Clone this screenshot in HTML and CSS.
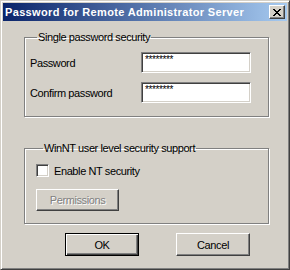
FILE: index.html
```
<!DOCTYPE html>
<html>
<head>
<meta charset="utf-8">
<link rel="stylesheet" href="styles.css">
</head>
<body>
<div class="window">
  <div class="titlebar">
    <span class="title">Password for Remote Administrator Server</span>
    <button class="close" aria-label="Close">
      <svg width="8" height="7" viewBox="0 0 8 7"><path d="M0 0h2v1h1v1h2v-1h1v-1h2v1h-1v1h-1v1h-1v1h1v1h1v1h1v1h-2v-1h-1v-1h-2v1h-1v1h-2v-1h1v-1h1v-1h1v-1h-1v-1h-1v-1h-1z" fill="#000"/></svg>
    </button>
  </div>
  <div class="client">
    <fieldset class="group group-single">
      <legend>Single password security</legend>
      <div class="row">
        <label class="field-label">Password</label>
        <div class="input">********</div>
      </div>
      <div class="row">
        <label class="field-label">Confirm password</label>
        <div class="input">********</div>
      </div>
    </fieldset>
    <fieldset class="group group-nt">
      <legend>WinNT user level security support</legend>
      <div class="check-row">
        <span class="checkbox"></span>
        <span class="check-label">Enable NT security</span>
      </div>
      <button class="btn btn-disabled">Permissions</button>
    </fieldset>
    <div class="actions">
      <button class="btn btn-default">OK</button>
      <button class="btn">Cancel</button>
    </div>
  </div>
</div>
</body>
</html>
```
FILE: styles.css
```
html, body {
  margin: 0;
  padding: 0;
  background: #d4d0c8;
}
body {
  font-family: "Liberation Sans", Arial, sans-serif;
  font-size: 11px;
  letter-spacing: -0.4px;
  color: #000;
}
.window {
  width: 290px;
  height: 270px;
  box-sizing: border-box;
  background: #d4d0c8;
  border: 1px solid;
  border-color: #d4d0c8 #404040 #404040 #d4d0c8;
  box-shadow: inset 1px 1px #fff, inset -1px -1px #808080;
  padding: 2px;
}
.titlebar {
  height: 18px;
  display: flex;
  align-items: center;
  justify-content: space-between;
  background: linear-gradient(to right, #0a246a, #a6caf0);
  padding: 0 2px 0 2px;
}
.title {
  font-weight: bold;
  color: #fff;
  letter-spacing: 0.35px;
  white-space: nowrap;
}
.close {
  width: 16px;
  height: 14px;
  padding: 0;
  margin: 0;
  box-sizing: border-box;
  background: #d4d0c8;
  border: 1px solid;
  border-color: #fff #404040 #404040 #fff;
  box-shadow: inset -1px -1px #808080;
  display: flex;
  align-items: center;
  justify-content: center;
}
.close svg { display: block; margin-left: -1px; }
.client {
  padding: 10px 18px 0 21px;
}
.group {
  margin: 0;
  padding: 0;
  border: 1px solid #808080;
  box-shadow: inset 1px 1px #fff, 1px 1px #fff;
  min-width: 0;
}
.group legend {
  padding: 0 1px;
  margin-left: 7px;
  line-height: 13px;
}
.group-single {
  height: 86px;
  box-sizing: border-box;
  padding: 8px 17px 0 5px;
}
.row {
  display: flex;
  align-items: center;
  justify-content: space-between;
  margin-bottom: 9px;
}
.input {
  width: 110px;
  height: 21px;
  box-sizing: border-box;
  background: #fff;
  border: 1px solid;
  border-color: #808080 #fff #fff #808080;
  box-shadow: inset 1px 1px #404040, inset -1px -1px #d4d0c8;
  padding: 1px 3px;
  font-size: 10px;
  line-height: 12px;
  letter-spacing: -0.4px;
}
.group-nt {
  margin-top: 25px;
  height: 82px;
  box-sizing: border-box;
  padding: 9px 10px 0 11px;
}
.check-row {
  display: flex;
  align-items: center;
  gap: 5px;
}
.checkbox {
  width: 13px;
  height: 13px;
  box-sizing: border-box;
  background: #fff;
  border: 1px solid;
  border-color: #808080 #fff #fff #808080;
  box-shadow: inset 1px 1px #404040, inset -1px -1px #d4d0c8;
}
.btn {
  font-family: "Liberation Sans", Arial, sans-serif;
  font-size: 11px;
  letter-spacing: -0.4px;
  width: 74px;
  height: 23px;
  box-sizing: border-box;
  background: #d4d0c8;
  border: 1px solid;
  border-color: #fff #404040 #404040 #fff;
  box-shadow: inset -1px -1px #808080;
  padding: 0;
  color: #000;
}
.btn-disabled {
  margin-top: 12px;
  width: 83px;
  height: 22px;
  color: #808080;
  text-shadow: 1px 1px #fff;
}
.btn-default {
  border: 1px solid #000;
  box-shadow: inset 1px 1px #fff, inset -1px -1px #404040, inset -2px -2px #808080;
}
.actions {
  display: flex;
  gap: 37px;
  padding-left: 41px;
  margin-top: 9px;
}
```
